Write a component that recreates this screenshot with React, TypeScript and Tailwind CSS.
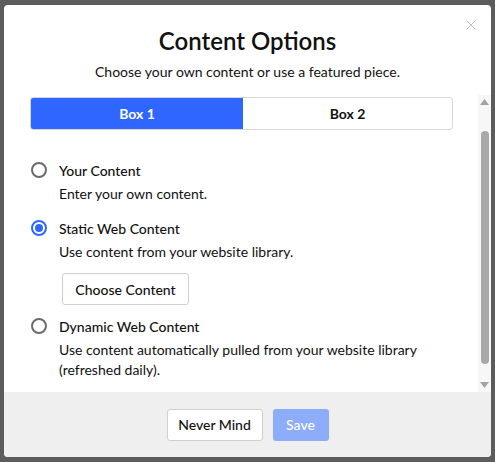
import { X } from 'lucide-react'

const OPTIONS = [
  { id: 'own', label: 'Your Content', desc: 'Enter your own content.' },
  { id: 'static', label: 'Static Web Content', desc: 'Use content from your website library.' },
  {
    id: 'dynamic',
    label: 'Dynamic Web Content',
    desc: 'Use content automatically pulled from your website library (refreshed daily).',
  },
]

function Radio({ checked }: { checked: boolean }) {
  return checked ? (
    <span className="flex h-4 w-4 shrink-0 items-center justify-center rounded-full border-2 border-[#2f66ff]">
      <span className="h-2 w-2 rounded-full bg-[#2f66ff]" />
    </span>
  ) : (
    <span className="h-4 w-4 shrink-0 rounded-full border-2 border-[#6b6b6b]" />
  )
}

export default function App() {
  const selected = 'static'
  return (
    <div
      className="h-[462px] w-[495px] overflow-hidden bg-[#5c5c5c] pl-[4px] pt-[5px]"
      style={{ fontFamily: 'Lato, "Noto Sans", sans-serif' }}
    >
      <div className="flex h-[452px] w-[487px] flex-col overflow-hidden rounded-[4px] bg-white text-[#111]">
        {/* Header */}
        <div className="relative flex h-[90px] shrink-0 flex-col items-center">
          <button className="absolute right-[12px] top-[12px] text-[#c4c4c4]">
            <X size={16} strokeWidth={1.5} />
          </button>
          <h1 className="mt-[21px] text-[24px] font-semibold leading-[30px]">Content Options</h1>
          <p className="mt-[7px] text-[14px] leading-[18px]">
            Choose your own content or use a featured piece.
          </p>
        </div>

        {/* Scrollable body */}
        <div className="flex h-[297px] shrink-0">
          <div className="flex-1 pl-[26px] pr-[25px] pt-[2px]">
            <div className="flex h-[33px] overflow-hidden rounded-[3px] border border-[#d6d6d6]">
              <div className="flex w-[212px] items-center justify-center bg-[#2f66ff] text-[14px] font-bold text-white">
                Box 1
              </div>
              <div className="flex flex-1 items-center justify-center text-[14px] font-bold">Box 2</div>
            </div>

            <div className="mt-[31px] flex flex-col">
              {OPTIONS.map((o) => (
                <div key={o.id} className={`flex flex-col ${o.id === selected ? 'mb-[12px]' : 'mb-[15px]'}`}>
                  <div className="flex h-[18px] items-center gap-[12px] pl-[1px]">
                    <Radio checked={o.id === selected} />
                    <span className="text-[14px] font-medium">{o.label}</span>
                  </div>
                  <p className="mt-[5px] pl-[29px] pr-[10px] text-[14px] leading-[20px]">{o.desc}</p>
                  {o.id === selected && (
                    <div className="pl-[32px] pt-[11px]">
                      <button className="h-[32px] w-[127px] rounded-[3px] border border-[#cfcfcf] bg-white text-[14px] font-medium">
                        Choose Content
                      </button>
                    </div>
                  )}
                </div>
              ))}
            </div>
          </div>

          {/* Scrollbar */}
          <div className="flex w-[13px] flex-col items-center bg-[#f7f7f7] pt-[4px]">
            <svg width="9" height="6" viewBox="0 0 9 6">
              <path d="M4.5 0 L9 6 L0 6 Z" fill="#a3a3a3" />
            </svg>
            <div className="mt-[26px] h-[233px] w-[8px] rounded-full bg-[#a8a8a8]" />
            <div className="flex-1" />
            <svg className="mb-[4px]" width="9" height="6" viewBox="0 0 9 6">
              <path d="M0 0 L9 0 L4.5 6 Z" fill="#a3a3a3" />
            </svg>
          </div>
        </div>

        {/* Footer */}
        <div className="flex flex-1 items-center justify-center gap-[10px] bg-[#efefef]">
          <button className="h-[32px] w-[96px] rounded-[3px] border border-[#cfcfcf] bg-white text-[14px] font-medium">
            Never Mind
          </button>
          <button className="h-[32px] w-[56px] rounded-[3px] bg-[#8dadfb] text-[14px] font-medium text-white">
            Save
          </button>
        </div>
      </div>
    </div>
  )
}
